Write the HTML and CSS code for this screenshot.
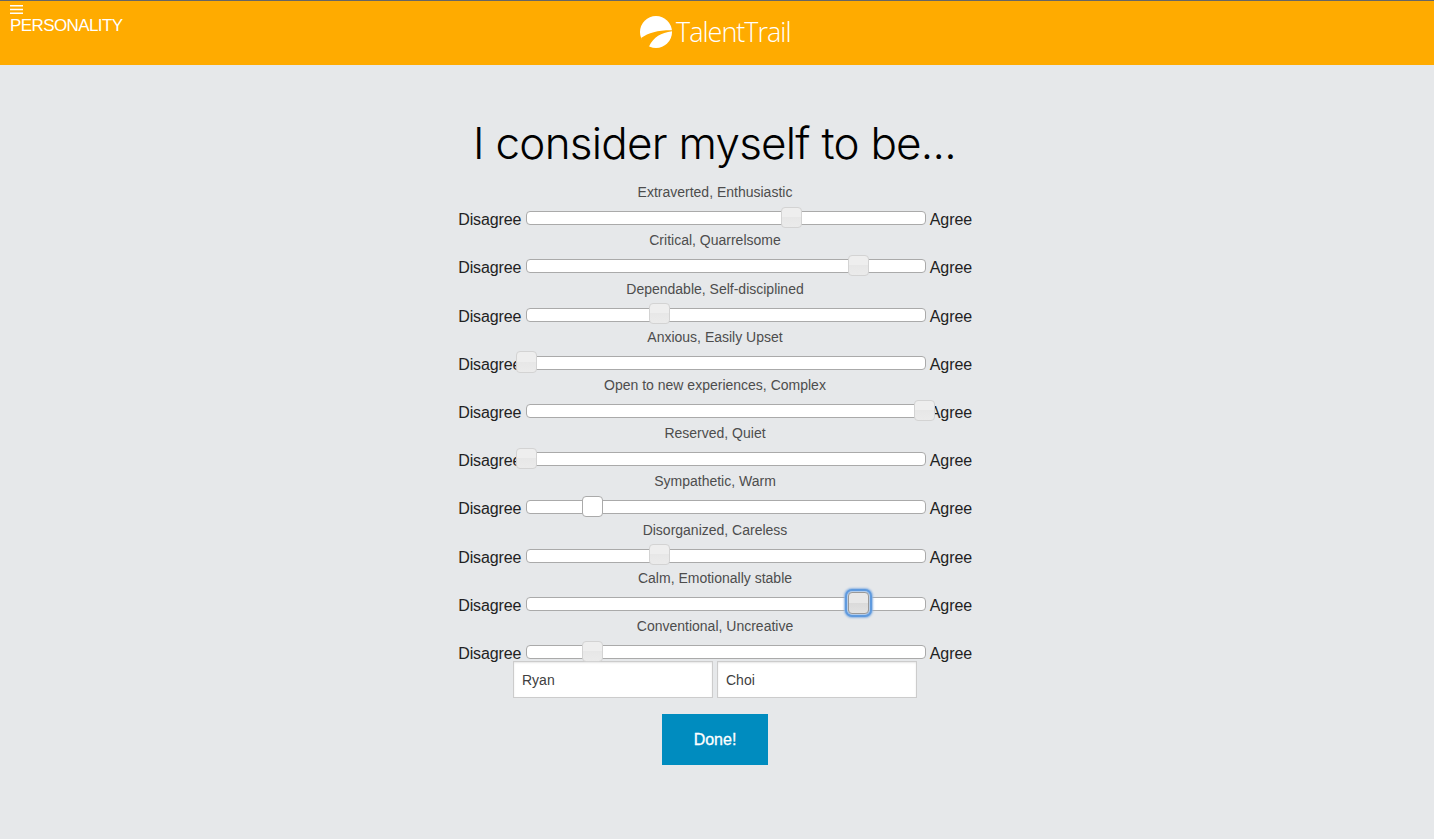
FILE: index.html
```html
<!DOCTYPE html>
<html lang="en">
<head>
    <meta charset="UTF-8">
    <meta name="viewport" content="width=device-width, initial-scale=1.0">
    <title>TalentTrail</title>
    <link rel="stylesheet" href="styles.css">
</head>
<body>
    <header class="top-bar">
        <div class="menu">
            <svg class="menu-icon" width="13" height="9" viewBox="0 0 13 9">
                <path d="M0 .8h13M0 4.5h13M0 8.2h13" stroke="#fff" stroke-width="1.5"/>
            </svg>
            <span class="menu-title">PERSONALITY</span>
        </div>
        <div class="logo">
            <svg width="32" height="32" viewBox="0 0 32 32">
                <circle cx="16" cy="16" r="16" fill="#fff"/>
                <path d="M1 22C9 16.5 18 14 32.5 14.2V15.2C21 17 14 20.5 9 30.5L4 30Z" fill="#ffab00"/>
            </svg>
            <span class="logo-text">TalentTrail</span>
        </div>
    </header>

    <main class="container">
        <h1>I consider myself to be...</h1>
        <form id="personality">
            <div id="questions"></div>
            <div class="names">
                <input type="text" name="first" value="Ryan">
                <input type="text" name="last" value="Choi">
            </div>
            <button type="button" class="done">Done!</button>
        </form>
    </main>

    <script>
        // value goes from 0 (disagree) to 6 (agree)
        const questions = [
            { label: 'Extraverted, Enthusiastic', value: 4 },
            { label: 'Critical, Quarrelsome', value: 5 },
            { label: 'Dependable, Self-disciplined', value: 2 },
            { label: 'Anxious, Easily Upset', value: 0 },
            { label: 'Open to new experiences, Complex', value: 6 },
            { label: 'Reserved, Quiet', value: 0 },
            { label: 'Sympathetic, Warm', value: 1, state: 'hover' },
            { label: 'Disorganized, Careless', value: 2 },
            { label: 'Calm, Emotionally stable', value: 5, state: 'focus' },
            { label: 'Conventional, Uncreative', value: 1 }
        ];

        document.getElementById('questions').innerHTML = questions.map(q => `
            <div class="question">
                <label>${q.label}</label>
                <div class="scale">
                    <span class="disagree">Disagree</span>
                    <div class="slider">
                        <span class="handle ${q.state || ''}" style="left: ${q.value / 6 * 100}%"></span>
                    </div>
                    <span class="agree">Agree</span>
                </div>
            </div>
        `).join('');
    </script>
</body>
</html>
```

FILE: styles.css
```css
* {
    box-sizing: border-box;
}
body {
    font-family: "Liberation Sans", Arial, sans-serif;
    font-size: 16px;
    margin: 0;
    background-color: #e6e8ea;
    color: #222;
}
.top-bar {
    display: grid;
    grid-template-columns: 1fr auto 1fr;
    height: 65px;
    padding: 0 13px 0 10px;
    border-top: 1px solid #666;
    background-color: #ffab00;
    color: #fff;
}
.menu {
    display: flex;
    flex-direction: column;
    align-items: flex-start;
    padding-top: 4px;
}
.menu-icon {
    display: block;
}
.menu-title {
    font-size: 17px;
    line-height: 20px;
    letter-spacing: -0.6px;
    margin-top: 2px;
}
.logo {
    display: flex;
    align-items: center;
    gap: 4px;
    height: 62px;
}
.logo-text {
    font-family: "Open Sans", sans-serif;
    font-size: 27px;
    font-weight: 300;
    line-height: 32px;
    letter-spacing: -1px;
    width: 115px;
    white-space: nowrap;
}
.container {
    padding-right: 4px;
    text-align: center;
}
h1 {
    font-family: Inter, "Liberation Sans", sans-serif;
    font-size: 44px;
    font-weight: 300;
    line-height: 62px;
    letter-spacing: -0.75px;
    color: #000;
    margin: 0;
    padding: 47px 1px 0 0;
    height: 114.4px;
}
.question {
    display: flow-root;
    height: 48.2px;
}
.question label {
    display: block;
    font-size: 14px;
    line-height: 26px;
    height: 26.15px;
    margin-top: -0.15px;
    color: #4d4d4d;
}
.scale {
    display: flex;
    justify-content: center;
    align-items: flex-start;
    height: 22.2px;
}
.disagree, .agree {
    line-height: 18px;
    padding-top: 5.85px;
    letter-spacing: -0.1px;
}
.disagree {
    width: 64px;
    margin-left: -0.4px;
}
.agree {
    width: 42px;
}
.slider {
    position: relative;
    width: 400px;
    height: 14px;
    margin: 5.8px 4px 0;
    border: 1px solid #aaa;
    border-radius: 4px;
    background-color: #fff;
}
.handle {
    position: absolute;
    z-index: 1;
    top: -5.3px;
    width: 21px;
    height: 21.2px;
    margin-left: -10.8px;
    border: 1px solid #d3d3d3;
    border-radius: 4px;
    background: linear-gradient(#eeeeee 50%, #e7e7e7 50%, #ebebeb);
}
.handle.hover {
    border-color: #aaa;
    background: #fff;
}
.handle.focus {
    border-color: #999;
    background: linear-gradient(#e8e8e8 50%, #dadada 50%, #e2e2e2);
    box-shadow: 0 0 0 1px #b5cdea, 0 0 0 3px #5f9ade, 0 0 2px 4px #8db4e2;
}
.names {
    display: flex;
    justify-content: center;
    gap: 4px;
}
.names input {
    width: 200px;
    height: 37px;
    padding: 8px;
    border: 1px solid #ccc;
    font-family: inherit;
    font-size: 14px;
    color: #404040;
    background-color: #fff;
    box-shadow: inset 0 1px 2px rgba(0,0,0,0.1);
}
.done {
    width: 106px;
    height: 51px;
    margin-top: 16px;
    border: none;
    background-color: #008cbf;
    color: #fff;
    font-family: inherit;
    font-size: 16px;
    -webkit-text-stroke: 0.3px #fff;
}
```
